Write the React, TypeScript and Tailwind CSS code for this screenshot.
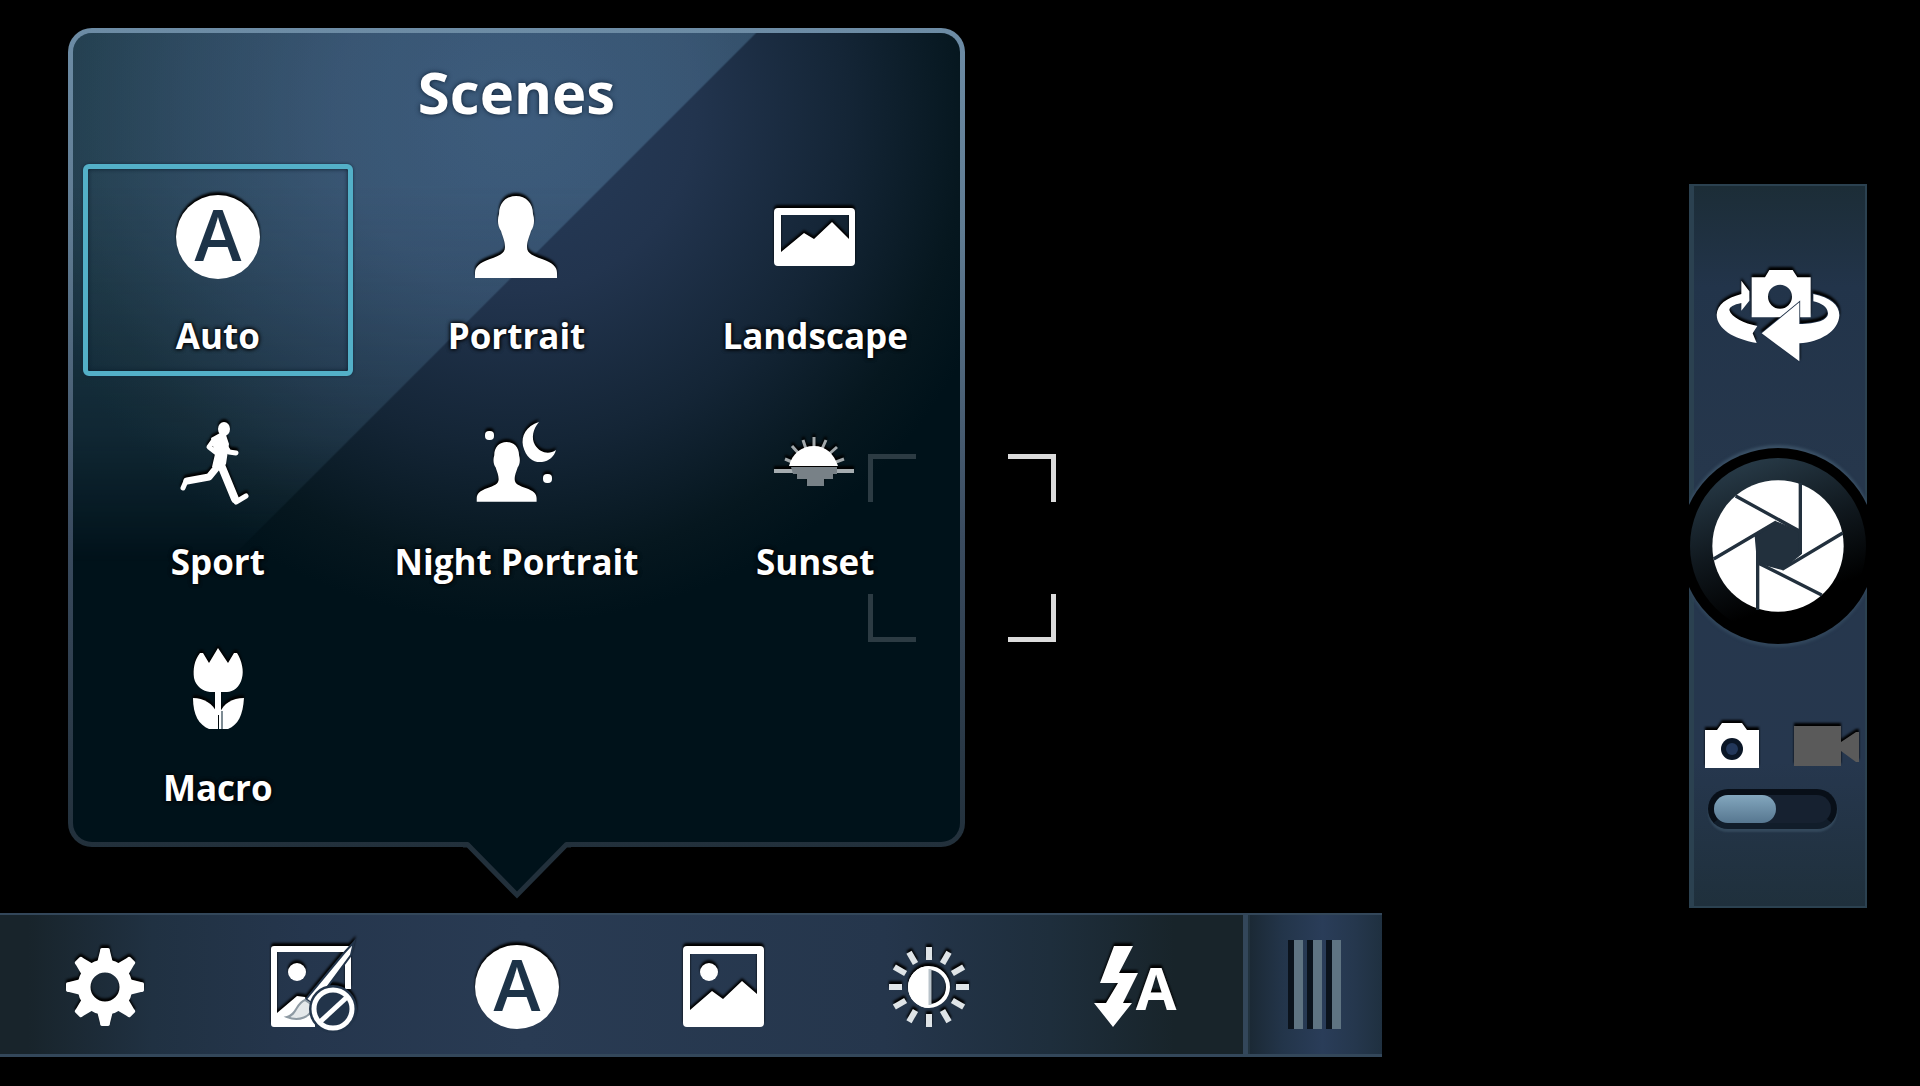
import React, { useState } from 'react'

const ICON = 'block h-[84px] w-[84px] overflow-visible [filter:drop-shadow(0_-3px_1px_#000)]'
const FONT = '"Open Sans", "Noto Sans", sans-serif'

const HEAD =
  'M42 0C52 0 59 7 59 18C61 24 60 31 57 35C55 42 53 45 53 51C53 58 60 60 68 63C79 67 83 71 83 77V82H1V77C1 71 5 67 16 63C24 60 31 58 31 51C31 45 29 42 27 35C24 31 23 24 25 18C25 7 32 0 42 0Z'

function AutoIcon() {
  return (
    <svg viewBox="0 0 84 84" className={ICON}>
      <circle cx="42" cy="42" r="42" fill="#fff" />
      <text
        x="42"
        y="66"
        textAnchor="middle"
        fontFamily={FONT}
        fontSize="71"
        fontWeight="600"
        fill="#1d3348"
      >
        A
      </text>
    </svg>
  )
}

function PortraitIcon() {
  return (
    <svg viewBox="0 0 84 84" className={ICON}>
      <path d={HEAD} fill="#fff" transform="translate(0 1)" />
    </svg>
  )
}

function LandscapeIcon() {
  return (
    <svg viewBox="0 0 84 84" className={ICON}>
      <path
        fill="#fff"
        fillRule="evenodd"
        d="M5 13H78Q82 13 82 17V67Q82 71 78 71H5Q1 71 1 67V17Q1 13 5 13ZM8 20V57L31 38L41 44L59 27L76 44V20Z"
      />
    </svg>
  )
}

function SportIcon() {
  return (
    <svg viewBox="0 0 84 84" className={ICON}>
      <g transform="translate(-1 1)">
        <ellipse cx="49" cy="7" rx="6" ry="7" fill="#fff" />
        <path d="M45 11L51 13L54 22L51 42L47 47L37 45L40 32L36 16Z" fill="#fff" />
        <g fill="none" stroke="#fff" strokeLinejoin="round" strokeLinecap="round">
          <path d="M39 18L34 25L43 32" strokeWidth="5" />
          <path d="M50 24L54 30L61 31" strokeWidth="5" />
          <path d="M43 44L34 55L12 59" strokeWidth="7" />
          <path d="M11 59L8 66" strokeWidth="5" />
          <path d="M46 43L53 60L60 77" strokeWidth="8" />
          <path d="M61 80L71 74" strokeWidth="5" />
        </g>
      </g>
    </svg>
  )
}

function NightPortraitIcon() {
  return (
    <svg viewBox="0 0 84 84" className={ICON} fill="#fff">
      <path d={HEAD} transform="translate(2 21) scale(.73)" />
      <rect x="11" y="10" width="9" height="9" rx="4" />
      <rect x="69" y="53" width="9" height="9" rx="4" />
      <path d="M65 1C52 5 47 15 49 25C52 37 60 42 68 41C75 40 80 36 82 29C75 34 66 32 61 24C57 17 59 8 65 1Z" />
    </svg>
  )
}

function SunsetIcon() {
  return (
    <svg viewBox="0 0 84 84" className={ICON}>
      <path
        d="M41 16V28M30 19L33 28M53 19L49 28M19 25L27 34M64 26L55 34M12 38L19 41M71 38L63 41"
        stroke="#a3a9ac"
        strokeWidth="3"
      />
      <path d="M16 45C19 33 28 25 41 25C53 25 61 33 65 45Z" fill="#fff" />
      <path d="M1 48H81V52H1Z" fill="#a5acb0" />
      <path d="M18 46H64V53H60V58H51V65H34V58H24V53H20Z" fill="#788187" />
    </svg>
  )
}

function MacroIcon() {
  return (
    <svg viewBox="0 0 84 84" className={ICON} fill="#fff">
      <path d="M24 6H27L33 16L42 1L52 16L58 6H61C66 14 68 24 66 31C64 40 57 45 51 45H34C27 44 20 40 18 31C17 22 18 14 24 6Z" />
      <path d="M39 44H45V68H39Z" />
      <path d="M17 51C28 51 36 56 42 67V82H33C23 78 17 68 17 51Z" />
      <path d="M68 51C56 51 48 56 43 67V82H52C62 78 67 68 68 51Z" />
      <path d="M46 64V82" stroke="#7d8b93" strokeWidth="2" />
    </svg>
  )
}

function GearIcon() {
  return (
    <svg viewBox="0 0 84 84" className={ICON}>
      <g fill="#fff">
        {[0, 45, 90, 135, 180, 225, 270, 315].map((deg) => (
          <path
            key={deg}
            d="M37 6Q37 3 39 3H45Q47 3 47 6L50 18H34Z"
            transform={`rotate(${deg} 42 42)`}
          />
        ))}
      </g>
      <circle cx="42" cy="42" r="21" fill="none" stroke="#fff" strokeWidth="13" />
    </svg>
  )
}

function SceneOffIcon() {
  return (
    <svg viewBox="0 0 84 84" className={ICON}>
      <path d="M79 44V4H5V79H46" fill="none" stroke="#fff" strokeWidth="6" strokeLinejoin="round" />
      <circle cx="28" cy="27" r="9" fill="#fff" />
      <path d="M8 68L28 51L36 52L44 68V80H8Z" fill="#fff" />
      <path d="M85 -3L82 10L45 60L37 54L75 8Z" fill="#fff" stroke="#22344a" strokeWidth="2" />
      <path
        d="M36 55L45 61C42 72 30 77 18 72C28 70 27 58 36 55Z"
        fill="#e4e8ea"
        stroke="#8e9aa3"
        strokeWidth="2"
      />
      <circle cx="64" cy="64" r="24" fill="#22344a" />
      <circle cx="64" cy="64" r="19" fill="none" stroke="#fff" strokeWidth="5" />
      <path d="M52 76L77 53" stroke="#fff" strokeWidth="5" />
    </svg>
  )
}

function PictureIcon() {
  return (
    <svg viewBox="0 0 84 84" className={ICON}>
      <path
        fill="#fff"
        fillRule="evenodd"
        d="M6 1H79Q83 1 83 5V78Q83 82 79 82H6Q2 82 2 78V5Q2 1 6 1ZM9 9V65L31 46L42 54L61 36L76 49V9Z"
      />
      <circle cx="28" cy="27" r="9" fill="#fff" />
    </svg>
  )
}

function BrightnessIcon() {
  return (
    <svg viewBox="0 0 84 84" className={ICON}>
      {[0, 30, 60, 90, 120, 150, 180, 210, 240, 270, 300, 330].map((deg) => (
        <path
          key={deg}
          d="M42 2V15"
          stroke="#dfe4e7"
          strokeWidth="6"
          transform={`rotate(${deg} 42 42)`}
        />
      ))}
      <circle cx="42" cy="42" r="19" fill="none" stroke="#fff" strokeWidth="4" />
      <path d="M42 21A21 21 0 0 0 42 63Z" fill="#fff" />
      <path d="M43 24V60" stroke="#b9c3ca" strokeWidth="3" />
    </svg>
  )
}

function FlashAutoIcon() {
  return (
    <svg viewBox="0 0 84 84" className={ICON} fill="#fff">
      <path d="M21 1H40L26 28H45L30 58H39L20 82L1 58H13L25 38H7Z" />
      <text x="63" y="65" textAnchor="middle" fontFamily={FONT} fontSize="59" fontWeight="700">
        A
      </text>
    </svg>
  )
}

function SwitchCameraIcon() {
  return (
    <svg
      viewBox="138 292 372 282"
      className="block h-[94px] w-[124px] overflow-visible [filter:drop-shadow(0_-3px_1px_#000)]"
      fill="#fff"
    >
      <path
        fillRule="evenodd"
        d="M245 320H285L298 298H368L382 320H422V440H245ZM330 342A36 36 0 1 0 330 414A36 36 0 1 0 330 342Z"
      />
      <path d="M214 330L238 362V390L214 420V397C190 402 178 409 178 418C184 440 222 458 262 466L248 488L260 517C190 504 141 475 140 432C142 402 168 382 214 370Z" />
      <path
        d="M275 488L388 395V460C440 460 475 448 474 427C472 408 455 398 430 392V370C480 380 508 402 508 434C506 482 450 515 388 518V572Z"
        stroke="#1f3047"
        strokeWidth="5"
        paintOrder="stroke"
      />
    </svg>
  )
}

function ApertureIcon() {
  return (
    <svg viewBox="125 182 396 396" className="block h-[132px] w-[132px]">
      <circle cx="323" cy="380" r="197" fill="#fff" />
      <g fill="#22303d" stroke="#22303d" strokeWidth="10">
        <path d="M318 308L387 335L390 405L335 450L262 430L255 350Z" strokeWidth="4" />
        <path d="M196 230L387 335M390 190V405M517 341L335 450M454 527L262 430M262 572V350M130 419L318 308" />
      </g>
    </svg>
  )
}

function PhotoIcon() {
  return (
    <svg
      viewBox="0 0 54 45"
      className="block h-[45px] w-[54px] overflow-visible [filter:drop-shadow(0_-3px_1px_#000)]"
    >
      <path d="M0 7H12L17 0H37L42 7H54V45H0Z" fill="#fff" />
      <circle cx="27" cy="26" r="11" fill="#0a1626" />
      <circle cx="27" cy="26" r="6" fill="#22375a" />
    </svg>
  )
}

function VideoIcon() {
  return (
    <svg
      viewBox="0 0 65 40"
      className="block h-10 w-[65px] overflow-visible [filter:drop-shadow(0_-3px_1px_#000)]"
    >
      <path d="M0 0H47V16L62 6H65V36H62L47 25V40H0Z" fill="#5a5a5a" />
    </svg>
  )
}

const SCENES = [
  { name: 'Auto', Icon: AutoIcon },
  { name: 'Portrait', Icon: PortraitIcon },
  { name: 'Landscape', Icon: LandscapeIcon },
  { name: 'Sport', Icon: SportIcon },
  { name: 'Night Portrait', Icon: NightPortraitIcon },
  { name: 'Sunset', Icon: SunsetIcon },
  { name: 'Macro', Icon: MacroIcon },
]

const TOOLS = [
  { name: 'Settings', Icon: GearIcon },
  { name: 'Effects off', Icon: SceneOffIcon },
  { name: 'Scenes', Icon: AutoIcon },
  { name: 'Picture mode', Icon: PictureIcon },
  { name: 'Brightness', Icon: BrightnessIcon },
  { name: 'Auto flash', Icon: FlashAutoIcon },
]

function ScenePicker() {
  const [scene, setScene] = useState('Auto')

  return (
    <section className="relative mt-7 ml-[68px] w-[897px] rounded-3xl bg-[linear-gradient(to_bottom,#6d8ca5,#5f7b92_25%,#3a4b5f_62%,#22303b)] p-[5px]">
      <div className="relative overflow-hidden rounded-[19px] bg-[#00121a] bg-[radial-gradient(510px_510px_at_50%_80px,#273c5a_0%,#22344e_35%,#142536_65%,#06171f_88%,#00121a_100%)] px-[10px] pb-[14px]">
        <div className="absolute inset-0 bg-[linear-gradient(135deg,rgba(125,185,225,0.26)_482px,transparent_484px)] [mask-image:linear-gradient(to_bottom,#000_150px,rgba(0,0,0,0.5)_400px,transparent_530px)]" />
        <h1 className="relative pt-[27px] pb-10 text-center text-[58px] leading-[64px] font-bold [text-shadow:0_0_5px_#0b1c30]">
          Scenes
        </h1>
        <div className="relative grid grid-cols-3 gap-x-[29px] gap-y-[14px]">
          {SCENES.map(({ name, Icon }) => (
            <button
              key={name}
              onClick={() => setScene(name)}
              className={`flex flex-col items-center gap-[35px] rounded-md border-[5px] pt-[26px] pb-[13px] ${
                scene === name
                  ? 'border-[#53b0c8] shadow-[0_0_3px_#12283c,inset_0_0_4px_#0b1c2c]'
                  : 'border-transparent'
              }`}
            >
              <Icon />
              <span className="text-[35px] leading-[44px] font-bold whitespace-nowrap [text-shadow:0_0_4px_#000,0_0_4px_#000]">
                {name}
              </span>
            </button>
          ))}
        </div>
      </div>
      <svg
        viewBox="0 0 112 64"
        className="absolute top-full left-1/2 -mt-[7px] h-16 w-28 -translate-x-1/2"
      >
        <path d="M5 0H107L104 3L56 54L8 3Z" fill="#00121a" />
        <path d="M2 5H7L56 55L105 5H110" fill="none" stroke="#22303b" strokeWidth="5" />
      </svg>
    </section>
  )
}

function CaptureBar() {
  const [video, setVideo] = useState(false)

  return (
    <aside className="mt-[184px] mr-[53px] flex w-[178px] flex-col items-center border-2 border-l-[5px] border-[#2b4150] bg-[linear-gradient(to_bottom,#1c2d37,#22344a_14%,#26374c_40%,#26374e_80%,#1f303c)] pt-[82px] pr-[3px] pb-[77px]">
      <button aria-label="Switch camera">
        <SwitchCameraIcon />
      </button>
      <button
        aria-label="Take photo"
        className="mt-[86px] flex h-[196px] w-[196px] shrink-0 items-center justify-center rounded-full bg-black shadow-[0_-3px_3px_#3a5065,0_3px_3px_#32475c] [clip-path:inset(-6px_9px)]"
      >
        <span className="flex h-[176px] w-[176px] items-center justify-center rounded-full bg-[linear-gradient(160deg,#2a3e4c_5%,#10181e_45%,#000_75%)]">
          <ApertureIcon />
        </span>
      </button>
      <div className="mt-[79px] flex w-full items-center gap-[35px] pl-[11px]">
        <PhotoIcon />
        <VideoIcon />
      </div>
      <input
        type="checkbox"
        role="switch"
        aria-label="Video mode"
        checked={video}
        onChange={() => setVideo(!video)}
        className="mt-[21px] ml-[14px] block h-10 w-[129px] appearance-none self-start rounded-full border-[6px] border-[#080f18] border-b-[#111d2a] bg-[#162130] shadow-[0_3px_2px_#34495c] before:block before:h-[28px] before:w-[62px] before:rounded-full before:bg-linear-to-b before:from-[#83a7be] before:to-[#577790] checked:before:ml-auto"
      />
    </aside>
  )
}

function Toolbar() {
  return (
    <nav className="flex h-36 w-[72%] border-t-2 border-b-[3px] border-[#33475a] bg-[linear-gradient(to_right,#18242b_2%,#203142_11%,#25364d_22%,#293b53_38%,#25364c_64%,#1e2e3c_76%,#18242a_85%)]">
      <div className="grid flex-1 grid-cols-6 pr-[5px] pl-[2px]">
        {TOOLS.map(({ name, Icon }) => (
          <button key={name} aria-label={name} className="flex items-center justify-center pt-1">
            <Icon />
          </button>
        ))}
      </div>
      <div className="w-[7px] border-r-2 border-[#22333f] bg-[#33475b]" />
      <button
        aria-label="Drag toolbar"
        className="flex w-[132px] items-center justify-center gap-1 bg-[linear-gradient(to_right,#1b2935,#23354a_25%,#2a3d59_55%,#25374d_80%,#1f3040)] pr-1"
      >
        {[0, 1, 2].map((bar) => (
          <span
            key={bar}
            className="h-[89px] w-[15px] border-l-[6px] border-[#0b131c] bg-[#5f7482]"
          />
        ))}
      </button>
    </nav>
  )
}

function FocusFrame() {
  return (
    <div className="pointer-events-none absolute top-[454px] left-1/2 ml-[2px] grid h-[188px] w-[188px] -translate-x-1/2 grid-cols-2 content-between">
      <span className="h-12 w-12 border-t-[5px] border-l-[5px] border-[#2c3b43]" />
      <span className="h-12 w-12 justify-self-end border-t-[5px] border-r-[5px] border-[#dcdcdc]" />
      <span className="h-12 w-12 border-b-[5px] border-l-[5px] border-[#2c3b43]" />
      <span className="h-12 w-12 justify-self-end border-r-[5px] border-b-[5px] border-[#dcdcdc]" />
    </div>
  )
}

export default function App() {
  return (
    <main className="relative flex min-h-screen flex-col bg-black pb-[29px] font-['Open_Sans','Noto_Sans',sans-serif] text-white">
      <div className="flex flex-1 items-start justify-between">
        <ScenePicker />
        <CaptureBar />
      </div>
      <Toolbar />
      <FocusFrame />
    </main>
  )
}
